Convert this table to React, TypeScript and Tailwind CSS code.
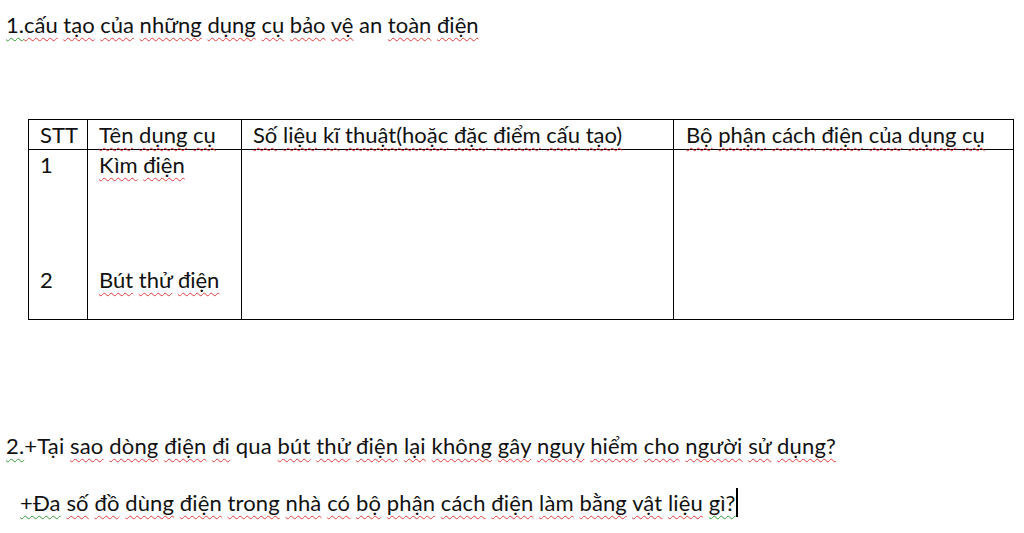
import React from 'react';

type Mark = 'r' | 'g' | '';
type Word = [string, Mark];

// word-style spell check squiggles
const markClass: Record<Mark, string> = {
  r: 'underline decoration-wavy decoration-[#e0403c] decoration-1 underline-offset-[4px]',
  g: 'underline decoration-wavy decoration-[#3a9a3a] decoration-1 underline-offset-[4px]',
  '': '',
};

const Words = ({ words }: { words: Word[] }) => (
  <>
    {words.map(([text, mark], i) => (
      <React.Fragment key={i}>
        {i > 0 && ' '}
        <span className={markClass[mark]}>{text}</span>
      </React.Fragment>
    ))}
  </>
);

const title: Word[] = [
  ['cấu', 'r'],
  ['tạo', 'r'],
  ['của', 'r'],
  ['những', 'r'],
  ['dụng', 'r'],
  ['cụ', 'r'],
  ['bảo', 'r'],
  ['vệ', 'r'],
  ['an', ''],
  ['toàn', 'r'],
  ['điện', 'r'],
];

const q2Rest: Word[] = [
  ['sao', 'r'],
  ['dòng', 'r'],
  ['điện', 'r'],
  ['đi', 'r'],
  ['qua', ''],
  ['bút', 'r'],
  ['thử', 'r'],
  ['điện', 'r'],
  ['lại', 'r'],
  ['không', 'r'],
  ['gây', 'r'],
  ['nguy', 'r'],
  ['hiểm', 'r'],
  ['cho', 'r'],
  ['người', 'r'],
  ['sử', 'r'],
  ['dụng?', 'r'],
];

const q3: Word[] = [
  ['+Đa', 'g'],
  ['số', 'r'],
  ['đồ', 'r'],
  ['dùng', 'r'],
  ['điện', 'r'],
  ['trong', 'r'],
  ['nhà', 'r'],
  ['có', 'r'],
  ['bộ', 'r'],
  ['phận', 'r'],
  ['cách', 'r'],
  ['điện', 'r'],
  ['làm', 'r'],
  ['bằng', 'r'],
  ['vật', 'r'],
  ['liệu', 'r'],
  ['gì?', 'g'],
];

export default function App() {
  return (
    <div
      className="w-[1024px] h-[533px] overflow-hidden bg-white text-[#111] text-[22px] leading-[27px]"
      style={{ fontFamily: 'Lato, "Noto Sans", sans-serif' }}
    >
      <p className="pt-[11px] pl-[6px]">
        <span className={markClass.g}>1.</span>
        <Words words={title} />
      </p>

      <table className="mt-[81px] ml-[28px] w-[986px] table-fixed border-collapse">
        <colgroup>
          <col className="w-[59px]" />
          <col className="w-[154px]" />
          <col className="w-[432px]" />
          <col />
        </colgroup>
        <thead>
          <tr className="h-[30px]">
            <th className="border border-black pl-[11px] text-left font-normal align-middle">STT</th>
            <th className="border border-black pl-[11px] text-left font-normal align-middle">
              <Words words={[['Tên', 'r'], ['dụng', 'r'], ['cụ', 'r']]} />
            </th>
            <th className="border border-black pl-[11px] text-left font-normal align-middle whitespace-nowrap">
              <Words
                words={[
                  ['Số', 'r'],
                  ['liệu', 'r'],
                  ['kĩ', 'r'],
                  ['thuật(hoặc', 'r'],
                  ['đặc', 'r'],
                  ['điểm', 'r'],
                  ['cấu', 'r'],
                  ['tạo)', 'r'],
                ]}
              />
            </th>
            <th className="border border-black pl-[12px] text-left font-normal align-middle whitespace-nowrap">
              <Words
                words={[
                  ['Bộ', 'r'],
                  ['phận', 'r'],
                  ['cách', 'r'],
                  ['điện', 'r'],
                  ['của', 'r'],
                  ['dụng', 'r'],
                  ['cụ', 'r'],
                ]}
              />
            </th>
          </tr>
        </thead>
        <tbody>
          <tr className="h-[170px]">
            <td className="border border-black pl-[11px] pt-[1px] align-top">
              <div className="h-[115px]">1</div>
              <div>2</div>
            </td>
            <td className="border border-black pl-[11px] pt-[1px] align-top whitespace-nowrap">
              <div className="h-[115px]">
                <Words words={[['Kìm', 'r'], ['điện', 'r']]} />
              </div>
              <div>
                <Words words={[['Bút', 'r'], ['thử', 'r'], ['điện', 'r']]} />
              </div>
            </td>
            <td className="border border-black" />
            <td className="border border-black" />
          </tr>
        </tbody>
      </table>

      <p className="mt-[112px] pl-[6px] whitespace-nowrap tracking-[0.15px]">
        <span className={markClass.g}>2.</span>+Tại <Words words={q2Rest} />
      </p>

      <p className="mt-[29px] pl-[20px] whitespace-nowrap tracking-[0.12px]">
        <Words words={q3} />
        <span className="inline-block w-[2px] h-[29px] bg-black align-[-6px]" />
      </p>
    </div>
  );
}
